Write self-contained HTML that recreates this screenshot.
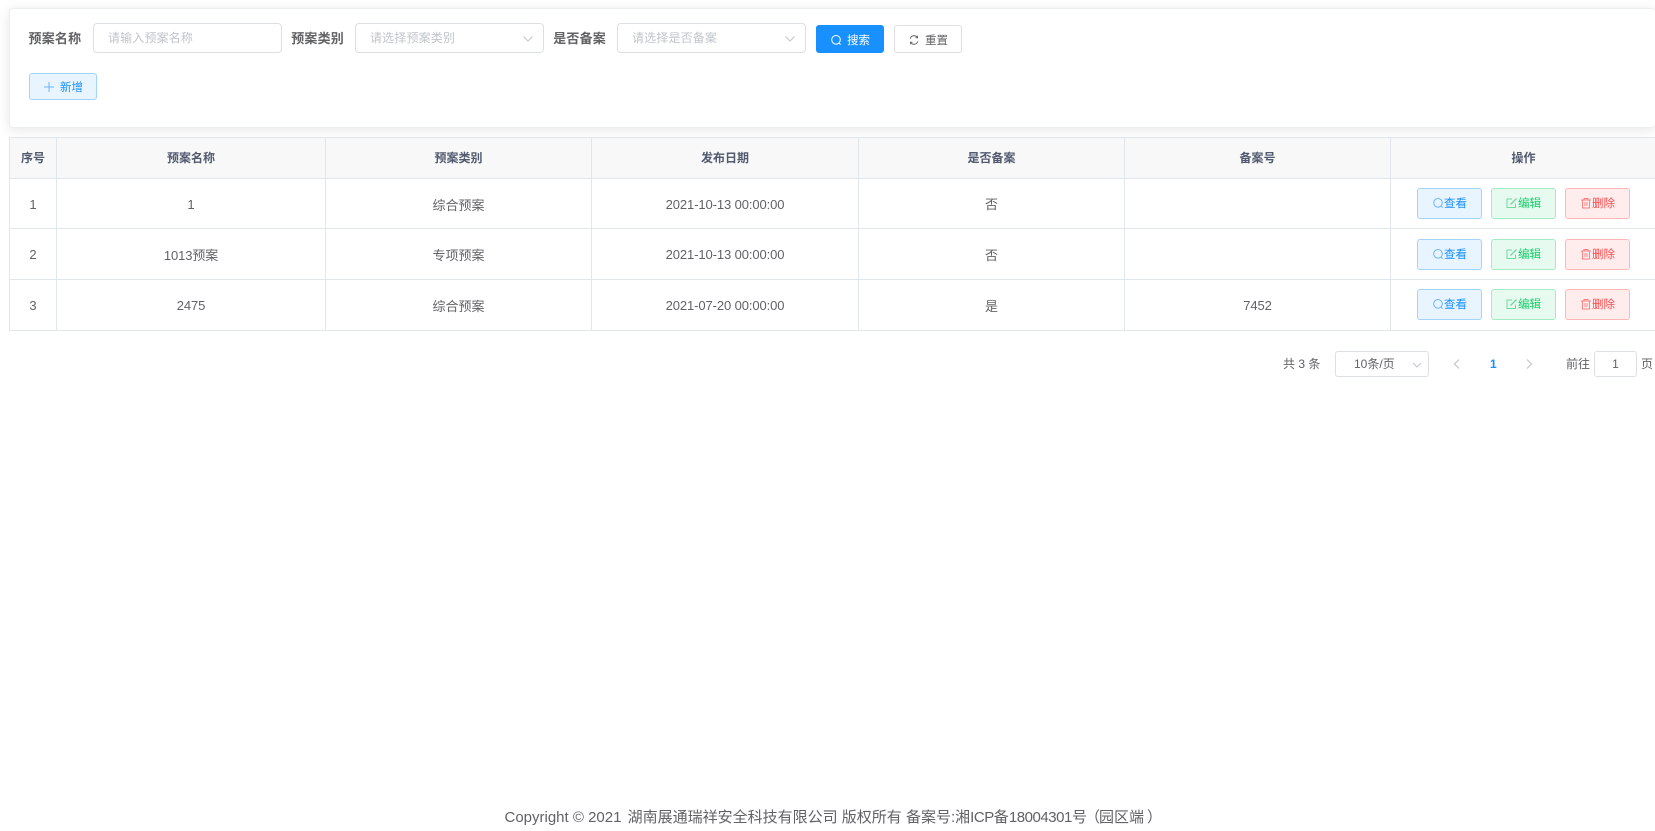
<!DOCTYPE html>
<html lang="zh-CN">
<head>
<meta charset="utf-8">
<title>预案管理</title>
<style>
*{box-sizing:border-box}
html,body{margin:0;padding:0;width:1655px;height:831px;overflow:hidden;background:#fff}
body{position:relative;font-family:"Liberation Sans","Noto Sans CJK SC",sans-serif;color:#606266}
.a{position:absolute}
.panel{left:9px;top:8px;width:1646px;height:120px;background:#fff;border:1px solid #ebeef5;border-right:0;border-radius:4px;box-shadow:0 2px 12px rgba(0,0,0,.1)}
.lab{font-size:13px;letter-spacing:.2px;font-weight:700;color:#606266;line-height:30px;top:24px;white-space:nowrap}
.inp{top:23px;height:30px;background:#fff;border:1px solid #dcdfe6;border-radius:4px;font-size:12px;letter-spacing:.15px;line-height:28px;color:#c0c4cc;padding-left:14px;white-space:nowrap}
.btn{display:flex;align-items:center;justify-content:center;border-radius:3px;font-size:11.5px;white-space:nowrap;border:1px solid}
.top{padding-top:1px}
.chev{position:absolute;right:9px;top:9px}
svg{display:block;flex:none;fill:none}
table{position:absolute;left:9px;top:137px;border-collapse:separate;border-spacing:0;table-layout:fixed;width:1648px;border-left:1px solid #dfe6ec;border-top:1px solid #dfe6ec;font-size:13px;color:#606266}
th,td{border-right:1px solid #dfe6ec;border-bottom:1px solid #dfe6ec;text-align:center;padding:0;font-weight:400}
th{background:#f8f8f9;font-size:12px;font-weight:700;color:#515a6e;height:41px;padding-bottom:1px}
.n{letter-spacing:-.1px}
.b{position:absolute;width:65px;height:31px;padding-bottom:2px}
.v{background:#e8f4ff;border-color:#a3d3ff;color:#1890ff}
.e{background:#e7faf0;border-color:#a3ebc5;color:#13ce66}
.d{background:#ffeded;border-color:#ffb6b6;color:#ff4949}
.pg{font-size:12px;color:#606266;line-height:26px;top:351px;white-space:nowrap}
.foot{left:504.5px;top:807px;font-size:15px;line-height:22px;color:#606266;white-space:nowrap}
</style>
</head>
<body>
<div class="a panel"></div>

<div class="a lab" style="left:28.5px">预案名称</div>
<div class="a inp" style="left:93px;width:189px">请输入预案名称</div>
<div class="a lab" style="left:291.2px">预案类别</div>
<div class="a inp" style="left:355px;width:189px">请选择预案类别<svg class="chev" width="12" height="12" viewBox="0 0 12 12"><path d="M1.500 3.500l4.500 4.500 4.500-4.500" stroke="#c0c4cc"/></svg></div>
<div class="a lab" style="left:553.2px">是否备案</div>
<div class="a inp" style="left:617px;width:189px">请选择是否备案<svg class="chev" width="12" height="12" viewBox="0 0 12 12"><path d="M1.500 3.500l4.500 4.500 4.500-4.500" stroke="#c0c4cc"/></svg></div>

<div class="a btn top" style="left:816px;top:25px;width:68px;height:28px;background:#1890ff;border-color:#1890ff;color:#fff"><svg width="12" height="12" viewBox="0 0 12 12" style="margin-right:5px"><circle cx="6" cy="5.800" r="4.300" stroke="#fff"/><path d="M9 9l1.600 1.600" stroke="#fff"/></svg>搜索</div>
<div class="a btn top" style="left:894px;top:25px;width:68px;height:28px;background:#fff;border-color:#dcdfe6;color:#606266"><svg width="12" height="12" viewBox="0 0 12 12" style="margin-right:5px"><path d="M2.200 4.600A4 4 0 0 1 9.400 3.600M9.800 7.400A4 4 0 0 1 2.600 8.400" stroke="#606266"/><path d="M9.600 1.600v2.200H7.400M2.400 10.400V8.200h2.200" stroke="#606266" stroke-width=".8"/></svg>重置</div>
<div class="a btn" style="left:29px;top:73px;width:68px;height:27px;background:#e8f4ff;border-color:#a3d3ff;color:#1890ff"><svg width="12" height="12" viewBox="0 0 12 12" style="margin-right:5px"><path d="M6 1v10M1 6h10" stroke="#6fb6f8"/></svg>新增</div>

<table>
<colgroup><col style="width:47px"><col style="width:269px"><col style="width:266px"><col style="width:267px"><col style="width:266px"><col style="width:266px"><col style="width:266px"></colgroup>
<tr><th>序号</th><th>预案名称</th><th>预案类别</th><th>发布日期</th><th>是否备案</th><th>备案号</th><th>操作</th></tr>
<tr style="height:50px"><td style="padding-top:1px">1</td><td style="padding-top:1px">1</td><td style="padding-top:1px">综合预案</td><td class="n" style="padding-top:1px">2021-10-13 00:00:00</td><td>否</td><td></td><td></td></tr>
<tr style="height:51px"><td>2</td><td class="n">1013预案</td><td>专项预案</td><td class="n">2021-10-13 00:00:00</td><td>否</td><td></td><td></td></tr>
<tr style="height:51px"><td>3</td><td class="n">2475</td><td>综合预案</td><td class="n">2021-07-20 00:00:00</td><td>是</td><td class="n">7452</td><td></td></tr>
</table>

<!-- row 1 -->
<div class="a btn b v" style="left:1417px;top:188px"><svg width="12" height="12" viewBox="0 0 12 12"><circle cx="6" cy="5.800" r="4.300" stroke="#6fb6f8"/><path d="M9 9l1.600 1.600" stroke="#6fb6f8"/></svg>查看</div>
<div class="a btn b e" style="left:1491px;top:188px"><svg width="12" height="12" viewBox="0 0 12 12"><path d="M9.500 6.500v4h-8.500v-8.500h5" stroke="#6fd9a0"/><path d="M4.500 7.500l6-6" stroke="#6fd9a0" stroke-width="1.300"/></svg>编辑</div>
<div class="a btn b d" style="left:1565px;top:188px"><svg width="12" height="12" viewBox="0 0 12 12"><path d="M1 3h10M4 3V1.500h4V3M2.500 3v8h7V3M5 5v4M7 5v4" stroke="#ff7a7a" stroke-width=".9"/></svg>删除</div>
<!-- row 2 -->
<div class="a btn b v" style="left:1417px;top:239px"><svg width="12" height="12" viewBox="0 0 12 12"><circle cx="6" cy="5.800" r="4.300" stroke="#6fb6f8"/><path d="M9 9l1.600 1.600" stroke="#6fb6f8"/></svg>查看</div>
<div class="a btn b e" style="left:1491px;top:239px"><svg width="12" height="12" viewBox="0 0 12 12"><path d="M9.500 6.500v4h-8.500v-8.500h5" stroke="#6fd9a0"/><path d="M4.500 7.500l6-6" stroke="#6fd9a0" stroke-width="1.300"/></svg>编辑</div>
<div class="a btn b d" style="left:1565px;top:239px"><svg width="12" height="12" viewBox="0 0 12 12"><path d="M1 3h10M4 3V1.500h4V3M2.500 3v8h7V3M5 5v4M7 5v4" stroke="#ff7a7a" stroke-width=".9"/></svg>删除</div>
<!-- row 3 -->
<div class="a btn b v" style="left:1417px;top:289px"><svg width="12" height="12" viewBox="0 0 12 12"><circle cx="6" cy="5.800" r="4.300" stroke="#6fb6f8"/><path d="M9 9l1.600 1.600" stroke="#6fb6f8"/></svg>查看</div>
<div class="a btn b e" style="left:1491px;top:289px"><svg width="12" height="12" viewBox="0 0 12 12"><path d="M9.500 6.500v4h-8.500v-8.500h5" stroke="#6fd9a0"/><path d="M4.500 7.500l6-6" stroke="#6fd9a0" stroke-width="1.300"/></svg>编辑</div>
<div class="a btn b d" style="left:1565px;top:289px"><svg width="12" height="12" viewBox="0 0 12 12"><path d="M1 3h10M4 3V1.500h4V3M2.500 3v8h7V3M5 5v4M7 5v4" stroke="#ff7a7a" stroke-width=".9"/></svg>删除</div>

<!-- pagination -->
<div class="a pg" style="left:1283px">共 3 条</div>
<div class="a" style="left:1335px;top:351px;width:94px;height:26px;border:1px solid #dcdfe6;border-radius:3px;font-size:12px;line-height:24px;padding-left:18px;color:#606266">10条/页<svg class="chev" style="right:6px;top:8px" width="10" height="10" viewBox="0 0 10 10"><path d="M1 3l4 4 4-4" stroke="#c0c4cc"/></svg></div>
<svg class="a" style="left:1452px;top:358px" width="10" height="12" viewBox="0 0 10 12"><path d="M7 1.500L2.500 6 7 10.500" stroke="#c0c4cc" stroke-width="1.200"/></svg>
<div class="a pg" style="left:1490px;font-weight:700;color:#1890ff">1</div>
<svg class="a" style="left:1524px;top:358px" width="10" height="12" viewBox="0 0 10 12"><path d="M3 1.500L7.500 6 3 10.500" stroke="#c0c4cc" stroke-width="1.200"/></svg>
<div class="a pg" style="left:1566px">前往</div>
<div class="a" style="left:1594px;top:351px;width:43px;height:26px;border:1px solid #dcdfe6;border-radius:3px;font-size:12px;line-height:24px;text-align:center;color:#606266">1</div>
<div class="a pg" style="left:1641px">页</div>

<div class="a foot">Copyright © 2021 <span style="margin-left:2px">湖南展通瑞祥安全科技有限公司 版权所有 备案号:湘</span><span style="letter-spacing:-.45px">ICP</span>备<span style="letter-spacing:-.45px">18004301</span>号<span style="margin-left:-2px;letter-spacing:-1px">（</span>园区端<span style="margin-left:3px">）</span></div>
</body>
</html>
